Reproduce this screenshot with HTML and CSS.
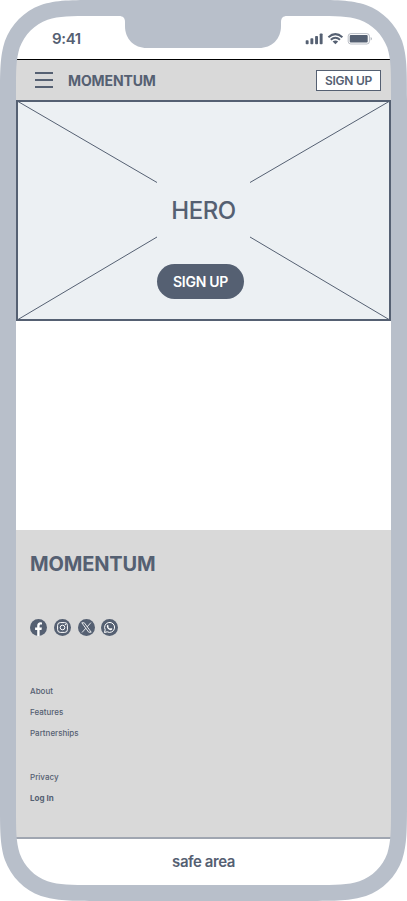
FILE: index.html
```html
<!DOCTYPE html>
<html lang="en">
<head>
<meta charset="utf-8">
<meta name="viewport" content="width=device-width, initial-scale=1">
<title>Momentum</title>
<link rel="stylesheet" href="styles.css">
</head>
<body>
<div class="phone">
  <div class="status">
    <span class="time">9:41</span>
    <svg class="indicators" width="68" height="14" viewBox="0 0 68 14">
      <g fill="#556072">
        <rect x="0.7" y="8.3" width="2.9" height="3.9" rx="0.8"/>
        <rect x="5.4" y="6.3" width="2.9" height="5.9" rx="0.8"/>
        <rect x="10.1" y="4" width="2.9" height="8.2" rx="0.8"/>
        <rect x="14.7" y="1.5" width="2.9" height="10.7" rx="0.8"/>
        <path d="M30.4 12.3L27.6 9.5Q30.4 7.4 33.2 9.5Z"/>
      </g>
      <g fill="none" stroke="#556072" stroke-width="2">
        <path d="M23.4 5.2Q30.4 -0.9 37.4 5.2"/>
        <path d="M25.8 7.7Q30.4 3.8 35 7.7"/>
      </g>
      <rect x="43.2" y="1.6" width="21.2" height="10.4" rx="2.6" fill="none" stroke="#556072" stroke-opacity=".4"/>
      <rect x="44.7" y="3.1" width="18" height="7.4" rx="1" fill="#556072"/>
      <path d="M65.6 5.1Q67 5.6 67 6.8T65.6 8.5Z" fill="#556072" fill-opacity=".45"/>
    </svg>
  </div>
  <header class="navbar">
    <div class="menu"><i></i><i></i><i></i></div>
    <span class="brand">MOMENTUM</span>
    <a class="nav-signup">SIGN UP</a>
  </header>
  <section class="hero">
    <svg class="cross" width="371" height="218" viewBox="0 0 371 218" fill="none" stroke="#556072">
      <path d="M0 -0.5L139 80.5M371 -0.5L232 80.5M0 217.5L139 135M371 217.5L232 135"/>
    </svg>
    <h1>HERO</h1>
    <a class="hero-signup">SIGN UP</a>
  </section>
  <main></main>
  <footer>
    <div class="footer-brand">MOMENTUM</div>
    <div class="social">
      <svg viewBox="0 0 17 17"><circle cx="8.5" cy="8.5" r="8.5" fill="#556072"/><path d="M7.2 16.9V10.9H5.1V8.5H7.2V6.7C7.2 4.5 8.5 3.3 10.4 3.3Q11.4 3.3 12 3.5V5.6H10.9C9.9 5.6 9.6 6.2 9.6 6.9V8.5H11.9L11.5 10.9H9.6V16.9Z" fill="#fff"/></svg>
      <svg viewBox="0 0 17 17"><circle cx="8.5" cy="8.5" r="8.5" fill="#556072"/><g fill="none" stroke="#fff" stroke-width="1"><rect x="3.6" y="3.6" width="9.8" height="9.8" rx="2.7"/><circle cx="8.5" cy="8.5" r="2.3"/></g><circle cx="11.4" cy="5.6" r=".7" fill="#fff"/></svg>
      <svg viewBox="0 0 17 17"><circle cx="8.5" cy="8.5" r="8.5" fill="#556072"/><path d="M3.8 3.8H6.3L13.2 13.2H10.7ZM12.9 3.6L9.1 7.9M7.9 9.2L4 13.5" fill="none" stroke="#fff" stroke-width=".85"/></svg>
      <svg viewBox="0 0 17 17"><circle cx="8.5" cy="8.5" r="8.5" fill="#556072"/><path d="M3.5 13.5L4.2 10.8A5 5 0 1 1 6.2 12.8Z" fill="none" stroke="#fff" stroke-width="1"/><path d="M7 5.7L7.7 7.2L7.2 7.9Q7.9 9.2 9.2 9.7L9.9 9L11.4 9.8Q11.2 11.2 9.7 11.2C7.8 11 6 9.1 5.8 7.4Q5.8 5.9 7 5.7Z" fill="#fff"/></svg>
    </div>
    <nav class="links"><a>About</a><a>Features</a><a>Partnerships</a></nav>
    <nav class="links"><a>Privacy</a><a class="strong">Log In</a></nav>
  </footer>
  <div class="safe">safe area</div>
  <svg class="frame" width="407" height="901" viewBox="0 0 407 901">
    <defs>
      <path id="outer" d="M0 0H99.4C70.8 0 56.4 0 41 4.9C24.2 11 11 24.2 4.9 41C0 56.4 0 70.8 0 99.4Z"/>
      <path id="inner" d="M16 16H92.4C70.4 16 59.4 16 47.6 19.7C34.6 24.5 24.5 34.6 19.7 47.6C16 59.4 16 70.4 16 92.4Z"/>
    </defs>
    <path fill="#b8bfca" fill-rule="evenodd" d="M0 0H407V901H0ZM16 16V885H391V16Z"/>
    <g fill="#b8bfca">
      <use href="#inner"/>
      <use href="#inner" transform="translate(407 0) scale(-1 1)"/>
      <use href="#inner" transform="translate(0 901) scale(1 -1)"/>
      <use href="#inner" transform="translate(407 901) scale(-1 -1)"/>
      <path d="M119 15V16C123 16 125 18 125 22V26C125 39 134 48 147 48H259C272 48 281 39 281 26V22C281 18 283 16 287 16V15Z"/>
    </g>
    <g fill="#fff">
      <use href="#outer"/>
      <use href="#outer" transform="translate(407 0) scale(-1 1)"/>
      <use href="#outer" transform="translate(0 901) scale(1 -1)"/>
      <use href="#outer" transform="translate(407 901) scale(-1 -1)"/>
    </g>
  </svg>
</div>
</body>
</html>
```
FILE: styles.css
```css
* { box-sizing: border-box; }
body {
  margin: 0;
  background: #fff;
  color: #556072;
  font-family: Inter, "Liberation Sans", sans-serif;
}
.phone {
  position: relative;
  width: 407px;
  height: 901px;
  padding: 16px;
  display: flex;
  flex-direction: column;
  overflow: hidden;
}
.frame { position: absolute; inset: 0; pointer-events: none; }
.status {
  height: 44px;
  flex: none;
  border-bottom: 1px solid #000;
  display: flex;
  justify-content: space-between;
  align-items: center;
  padding: 3px 18px 0 36px;
}
.time { font-size: 15px; font-weight: 600; letter-spacing: -0.35px; padding-bottom: 2px; }
.navbar {
  height: 40px;
  flex: none;
  background: #d9d9d9;
  display: flex;
  align-items: center;
  padding: 0 10px 0 19px;
}
.menu { width: 18px; display: grid; gap: 5px; margin-right: 15px; }
.menu i { height: 2px; background: #556072; }
.brand { font-size: 14px; font-weight: 700; line-height: 20px; padding-top: 1px; letter-spacing: -0.12px; }
.nav-signup {
  margin-left: auto;
  width: 65px;
  height: 21px;
  border: 1px solid #556072;
  background: #fff;
  font-size: 12px;
  font-weight: 600;
  line-height: 19px;
  letter-spacing: -0.25px;
  text-align: center;
}
.hero {
  position: relative;
  height: 221px;
  flex: none;
  border: 2px solid #556072;
  background: #ecf0f3;
  display: flex;
  flex-direction: column;
  align-items: center;
  padding-top: 94px;
}
.cross { position: absolute; left: 0; top: 0; }
h1 { margin: 0 0 38px; font-size: 24px; font-weight: 450; line-height: 30px; letter-spacing: -0.5px; }
.hero-signup {
  width: 87px;
  height: 35px;
  border-radius: 18px;
  background: #556072;
  color: #fff;
  font-size: 14px;
  font-weight: 600;
  line-height: 36px;
  letter-spacing: -0.3px;
  text-align: center;
  margin-right: 6px;
}
main { flex: 1; }
footer {
  height: 307px;
  flex: none;
  background: #d9d9d9;
  padding: 20px 14px 0;
}
.footer-brand { font-size: 20px; font-weight: 700; line-height: 28px; letter-spacing: -0.15px; }
.social { display: flex; gap: 6.8px; margin: 41px 0 50px; }
.social svg { width: 17px; height: 17px; display: block; }
.links { display: grid; grid-auto-rows: 21px; font-size: 8px; font-weight: 500; line-height: 11px; margin-bottom: 23px; }
.strong { font-weight: 700; }
.safe {
  height: 48px;
  flex: none;
  border-top: 2px solid #a0a6b1;
  text-align: center;
  font-size: 15px;
  font-weight: 600;
  line-height: 46px;
  letter-spacing: -0.45px;
}
```
